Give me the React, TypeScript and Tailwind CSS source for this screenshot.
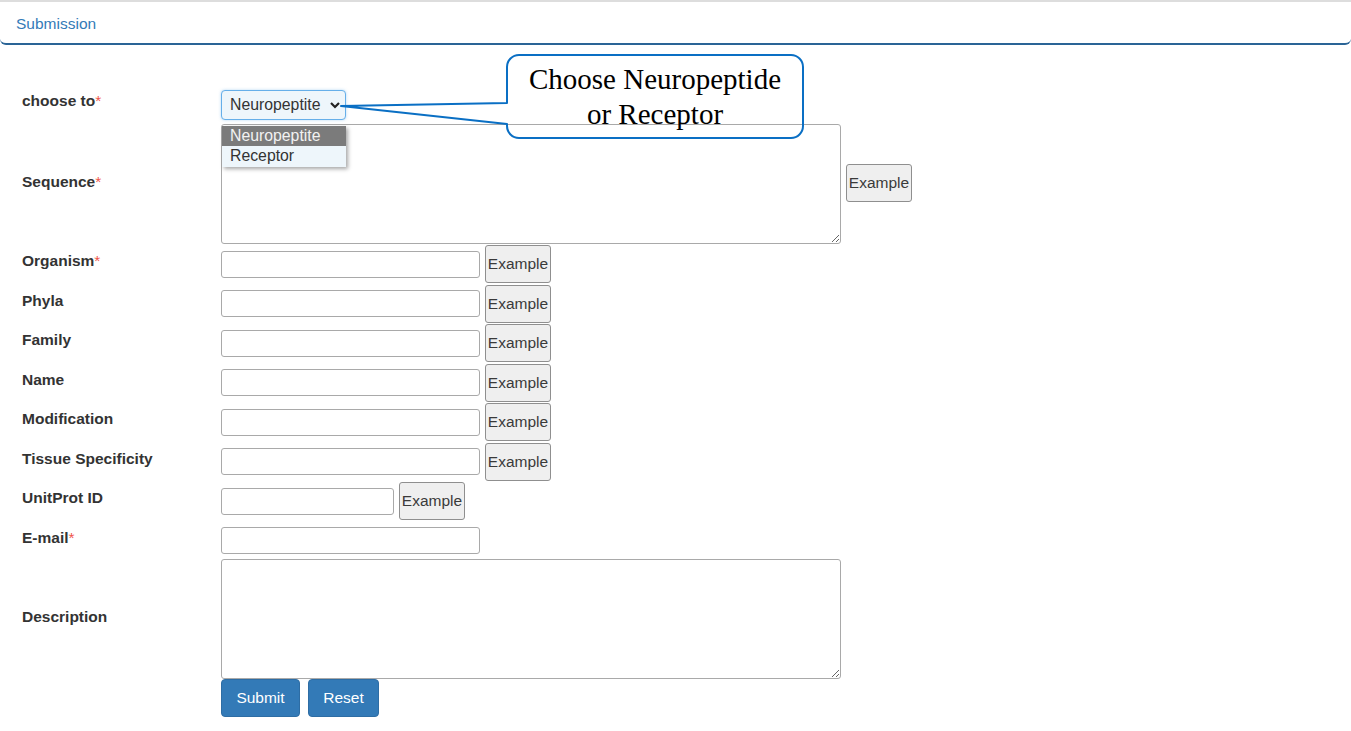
import React from "react";

const font = { fontFamily: '"Liberation Sans", Arial, Helvetica, sans-serif' };

function Req() {
  return <span className="text-[#f0554b] font-normal">*</span>;
}

function ExampleBtn() {
  return (
    <button
      type="button"
      className="h-[38px] w-[66px] shrink-0 rounded-[3px] border border-[#8f8f8f] bg-[#efefef] px-0 text-[15.5px] text-[#3a3a3a]"
    >
      Example
    </button>
  );
}

function InputRow({
  label,
  req,
  width = "w-[259px]",
  example = true,
  h = "h-[39.5px]",
}: {
  label: string;
  req?: boolean;
  width?: string;
  example?: boolean;
  h?: string;
}) {
  return (
    <div className={`flex ${h}`}>
      <div className="w-[199px] shrink-0 pt-[6px] text-[15.5px] font-bold leading-5 text-[#333]">
        {label}
        {req && <Req />}
      </div>
      <div className="flex h-[38px] items-center gap-[5px]">
        <input
          type="text"
          className={`${width} h-[27px] rounded-[3px] border border-[#a9a9a9] bg-white`}
        />
        {example && <ExampleBtn />}
      </div>
    </div>
  );
}

export default function App() {
  return (
    <div className="relative h-[731px] w-[1351px] overflow-hidden bg-white" style={font}>
      {/* header */}
      <div className="h-[45px] rounded-b-[6px] border-t-2 border-b-2 border-t-[#dddddd] border-b-[#2a6496] bg-white pl-[16px] pt-[10px]">
        <span className="text-[15.5px] leading-5 text-[#337ab7]">Submission</span>
      </div>

      <form className="pl-[22px] pt-[45px]">
        {/* choose to */}
        <div className="flex h-[30px]">
          <div className="w-[199px] shrink-0 pt-[1px] text-[15.5px] font-bold leading-5 text-[#333]">
            choose to
            <Req />
          </div>
          <div className="flex h-[30px] w-[125px] items-center justify-between rounded-[4px] border border-[#66afe9] bg-[#eef6fb] pl-[8px] pr-[4px] shadow-[0_0_3px_rgba(102,175,233,0.5)]">
            <span className="text-[15.8px] text-[#333]">Neuropeptite</span>
            <svg width="12" height="8" viewBox="0 0 12 8">
              <polyline points="2,2 6,6 10,2" fill="none" stroke="#222" strokeWidth="2.2" />
            </svg>
          </div>
        </div>

        {/* sequence */}
        <div className="mt-[4px] flex h-[120px] items-center">
          <div className="w-[199px] shrink-0 -mt-[4px] text-[15.5px] font-bold leading-5 text-[#333]">
            Sequence
            <Req />
          </div>
          <textarea className="h-[120px] w-[620px] rounded-[3px] border border-[#a9a9a9] bg-white" />
          <div className="ml-[5px] -mt-[2px]">
            <ExampleBtn />
          </div>
        </div>

        <div className="mt-[1px]">
          <InputRow label="Organism" req />
          <InputRow label="Phyla" />
          <InputRow label="Family" />
          <InputRow label="Name" />
          <InputRow label="Modification" />
          <InputRow label="Tissue Specificity" />
          <InputRow label="UnitProt ID" width="w-[173px]" />
          <InputRow label="E-mail" req example={false} h="h-[37px]" />
        </div>

        {/* description */}
        <div className="flex h-[120px] items-center">
          <div className="w-[199px] shrink-0 -mt-[3px] text-[15.5px] font-bold leading-5 text-[#333]">
            Description
          </div>
          <textarea className="h-[120px] w-[620px] rounded-[3px] border border-[#a9a9a9] bg-white" />
        </div>

        <div className="ml-[199px] flex gap-[8px]">
          <button
            type="button"
            className="h-[38px] w-[79px] rounded-[4px] border border-[#2e6da4] bg-[#337ab7] text-[15.5px] text-white"
          >
            Submit
          </button>
          <button
            type="button"
            className="h-[38px] w-[71px] rounded-[4px] border border-[#2e6da4] bg-[#337ab7] text-[15.5px] text-white"
          >
            Reset
          </button>
        </div>
      </form>

      {/* open dropdown list */}
      <div className="absolute left-[222px] top-[126px] w-[124px] bg-[#eef6fb] shadow-[2px_2px_4px_rgba(0,0,0,0.35)]">
        <div className="h-[20px] bg-[#7b7b7b] pl-[8px] text-[15.8px] leading-5 text-[#f2f2f2]">Neuropeptite</div>
        <div className="h-[21px] pl-[8px] text-[15.8px] leading-5 text-[#333]">Receptor</div>
      </div>

      {/* callout annotation */}
      <svg
        className="pointer-events-none absolute left-0 top-0"
        width="1351"
        height="731"
        viewBox="0 0 1351 731"
      >
        <path
          d="M507 103 L507 67 A12 12 0 0 1 519 55 L791 55 A12 12 0 0 1 803 67 L803 126 A12 12 0 0 1 791 138 L519 138 A12 12 0 0 1 507 126 L507 124 L341 106 Z"
          fill="none"
          stroke="#0a6fc4"
          strokeWidth="2"
          strokeLinejoin="round"
        />
      </svg>
      <div
        className="pointer-events-none absolute left-[507px] top-[62px] w-[296px] text-center text-[29px] leading-[35px] text-black"
        style={{ fontFamily: '"Liberation Serif", "Times New Roman", serif' }}
      >
        Choose Neuropeptide
        <br />
        or Receptor
      </div>
    </div>
  );
}
